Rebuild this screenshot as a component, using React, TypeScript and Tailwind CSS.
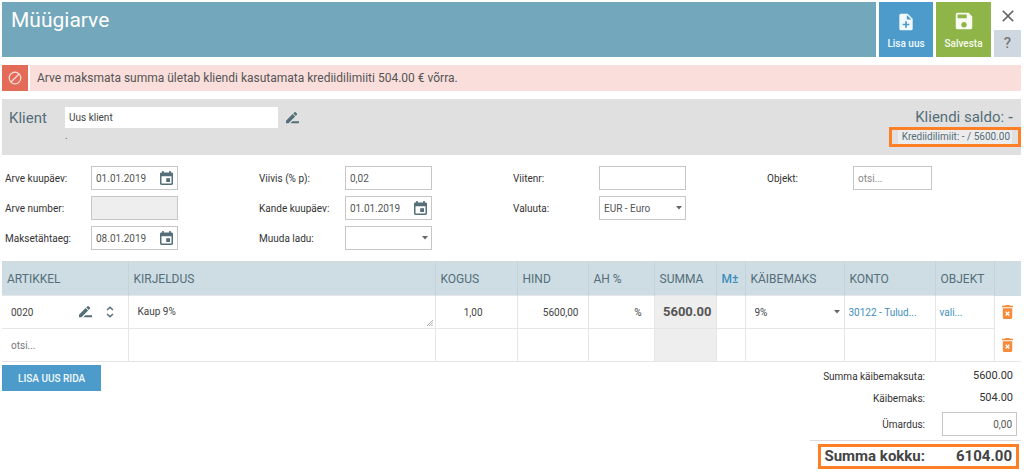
import type { ReactNode } from "react";
import { MdClose, MdNoteAdd, MdSave } from "react-icons/md";

interface iFieldProps {
	id: string;
	label: string;
	children: ReactNode;
}

interface iInputProps {
	id: string;
	value?: string;
	placeholder?: string;
	disabled?: boolean;
}

const inputClass =
	"block h-6 w-full border border-[#c6c6c6] bg-white px-1 text-[10px] text-[#555] placeholder:text-[#888] outline-none disabled:bg-[#eee]";

const Field = (props: iFieldProps) => (
	<div className="flex h-6 items-center">
		<label htmlFor={props.id} className="w-[86px] shrink-0 text-[10px] text-[#333]">
			{props.label}
		</label>
		{props.children}
	</div>
);

const TextInput = (props: iInputProps) => (
	<div className="w-[87px]">
		<input
			id={props.id}
			type="text"
			className={inputClass}
			defaultValue={props.value}
			placeholder={props.placeholder}
			disabled={props.disabled}
		/>
	</div>
);

const CalendarIcon = () => (
	<svg viewBox="0 0 13 14" className="h-3.5 w-[13px] fill-[#546e7a]">
		<path
			fillRule="evenodd"
			d="M2.2 0h1.6v1.4h5.4V0h1.6v1.4h.8A1.4 1.4 0 0 1 13 2.8v9.8a1.4 1.4 0 0 1-1.4 1.4H1.4A1.4 1.4 0 0 1 0 12.6V2.8a1.4 1.4 0 0 1 1.4-1.4h.8zM1.5 5.2v7.3h10V5.2z"
		/>
		<path d="M6.2 7.2h3.8v3.8H6.2z" />
	</svg>
);

const DateInput = (props: iInputProps) => (
	<div className="flex h-6 w-[87px] items-center border border-[#c6c6c6] bg-white pr-1 pl-1">
		<input
			id={props.id}
			type="text"
			className="min-w-0 flex-1 text-[10px] text-[#555] outline-none"
			defaultValue={props.value}
		/>
		<button type="button" aria-label="Kalender">
			<CalendarIcon />
		</button>
	</div>
);

const Caret = () => (
	<svg viewBox="0 0 6 4" className="pointer-events-none absolute right-1 h-1 w-1.5 fill-[#666]">
		<path d="M0 0h6L3 3.6z" />
	</svg>
);

const SelectInput = (props: iInputProps) => (
	<div className="relative flex h-6 w-[87px] items-center">
		<select id={props.id} className={inputClass + " appearance-none"}>
			<option>{props.value}</option>
		</select>
		<Caret />
	</div>
);

const PencilIcon = () => (
	<svg viewBox="0 0 13 12" className="h-3 w-[13px] fill-[#546e7a]">
		<path d="M0 11.2V8.7L6.6 2.1l2.5 2.5-6.6 6.6zM7.3 1.4L8.4.3a.9.9 0 0 1 1.2 0l1.3 1.3a.9.9 0 0 1 0 1.2L9.8 3.9zM6.4 9.2H13v2H4.4z" />
	</svg>
);

const UnfoldIcon = () => (
	<svg viewBox="0 0 8 12" className="h-3 w-2 stroke-[#546e7a]" fill="none" strokeWidth="1.5">
		<path d="M1 4L4 1.2 7 4M1 8l3 2.8L7 8" />
	</svg>
);

const BlockIcon = () => (
	<svg viewBox="0 0 14 14" className="h-3.5 w-3.5 stroke-[#fbdedb]" fill="none" strokeWidth="1.2">
		<circle cx="7" cy="7" r="5.8" />
		<path d="M3 11L11 3" />
	</svg>
);

const ResizeGrip = () => (
	<svg viewBox="0 0 6 6" className="pointer-events-none absolute right-0.5 bottom-0.5 h-1.5 w-1.5 stroke-[#999]" strokeWidth="0.8">
		<path d="M0 6L6 0M2.2 6L6 2.2M4.4 6L6 4.4" />
	</svg>
);

const DeleteButton = () => (
	<button type="button" aria-label="Kustuta rida" className="mx-auto block">
		<svg viewBox="0 0 11 14" className="h-3.5 w-[11px]">
			<path
				className="fill-[#f68b3c]"
				d="M3.6 0h3.8l.7.8H11v1.5H0V.8h2.9zM.8 3.2h9.4v9.2a1.5 1.5 0 0 1-1.5 1.5H2.3a1.5 1.5 0 0 1-1.5-1.5z"
			/>
			<path className="stroke-white" strokeWidth="1.4" d="M3.7 6.8l3.6 3.6M7.3 6.8l-3.6 3.6" />
		</svg>
	</button>
);

const th = "border-x border-[#c5d2d7] px-[5px] text-left text-xs font-normal text-[#546e7a]";
const td = "border border-[#e6e6e6] p-0 text-[10px] text-[#444]";
const cellInput = "block w-full bg-transparent px-[9px] text-[10px] outline-none placeholder:text-[#777]";

const InvoiceLines = () => (
	<table className="w-full table-fixed border-collapse">
		<colgroup>
			<col className="w-[126px]" />
			<col />
			<col className="w-[82px]" />
			<col className="w-[71px]" />
			<col className="w-[66px]" />
			<col className="w-[62px]" />
			<col className="w-[29px]" />
			<col className="w-[99px]" />
			<col className="w-[91px]" />
			<col className="w-[59px]" />
			<col className="w-[27px]" />
		</colgroup>
		<thead>
			<tr className="h-[34px] border-t border-[#d5d9da] bg-[#cddde3]">
				<th className={th + " border-l-0"}>ARTIKKEL</th>
				<th className={th}>KIRJELDUS</th>
				<th className={th}>KOGUS</th>
				<th className={th}>HIND</th>
				<th className={th}>AH %</th>
				<th className={th}>SUMMA</th>
				<th className={th}>
					<a href="#" className="font-medium text-[#3f8fbd]">M±</a>
				</th>
				<th className={th}>KÄIBEMAKS</th>
				<th className={th}>KONTO</th>
				<th className={th}>OBJEKT</th>
				<th className={th + " border-r-0"}></th>
			</tr>
		</thead>
		<tbody>
			<tr className="h-[33px]">
				<td className={td + " border-l-0"}>
					<div className="flex items-center pr-3.5">
						<input aria-label="Artikkel" className={cellInput + " min-w-0 flex-1"} defaultValue="0020" />
						<button type="button" aria-label="Muuda artiklit" className="mr-3.5">
							<PencilIcon />
						</button>
						<button type="button" aria-label="Ava loend">
							<UnfoldIcon />
						</button>
					</div>
				</td>
				<td className={td}>
					<div className="relative">
						<textarea
							aria-label="Kirjeldus"
							rows={1}
							className="block h-8 w-full resize-none px-[9px] py-2 text-[10px] leading-4 outline-none"
							defaultValue="Kaup 9%"
						/>
						<ResizeGrip />
					</div>
				</td>
				<td className={td}>
					<input aria-label="Kogus" className={cellInput + " pr-[34px] text-right"} defaultValue="1,00" />
				</td>
				<td className={td}>
					<input aria-label="Hind" className={cellInput + " text-right"} defaultValue="5600,00" />
				</td>
				<td className={td}>
					<div className="flex items-center pr-3">
						<input aria-label="Allahindlus" className={cellInput + " min-w-0 flex-1"} />
						<span>%</span>
					</div>
				</td>
				<td className={td + " bg-[#eee] pr-1 text-right text-[13px] font-bold text-[#555]"}>5600.00</td>
				<td className={td}></td>
				<td className={td}>
					<div className="relative flex items-center">
						<select aria-label="Käibemaks" className={cellInput + " appearance-none"}>
							<option>9%</option>
						</select>
						<Caret />
					</div>
				</td>
				<td className={td + " px-1"}>
					<a href="#" className="block truncate text-[#3f8fbd]">30122 - Tulud...</a>
				</td>
				<td className={td + " px-1"}>
					<a href="#" className="text-[#3f8fbd]">vali...</a>
				</td>
				<td className="p-0">
					<DeleteButton />
				</td>
			</tr>
			<tr className="h-[33px]">
				<td className={td + " border-l-0"}>
					<input aria-label="Otsi artiklit" className={cellInput} placeholder="otsi..." />
				</td>
				<td className={td}></td>
				<td className={td}></td>
				<td className={td}></td>
				<td className={td}></td>
				<td className={td + " bg-[#eee]"}></td>
				<td className={td}></td>
				<td className={td}></td>
				<td className={td}></td>
				<td className={td}></td>
				<td className="border-b border-[#e6e6e6] p-0">
					<DeleteButton />
				</td>
			</tr>
		</tbody>
	</table>
);

const Totals = () => (
	<div className="w-[211px] pt-[3px] text-[10px] text-[#333]">
		<div className="flex h-[22px] items-center pr-2 text-right">
			<span className="w-[115px]">Summa käibemaksuta:</span>
			<span className="flex-1 text-[11px]">5600.00</span>
		</div>
		<div className="flex h-[22px] items-center pr-2 text-right">
			<span className="w-[115px]">Käibemaks:</span>
			<span className="flex-1 text-[11px]">504.00</span>
		</div>
		<div className="flex items-center pt-[3px] pr-1 pb-1">
			<label htmlFor="umardus" className="w-[115px] text-right">Ümardus:</label>
			<div className="ml-auto w-[75px]">
				<input id="umardus" className={inputClass + " text-right"} defaultValue="0,00" />
			</div>
		</div>
		<div className="border-t border-[#ddd] pt-[3px] pr-0.5 pl-2">
			<div className="flex h-[25px] items-center border-[3px] border-[#ff7f27] pr-1 text-right text-[15px] font-bold text-[#444]">
				<span className="w-[104px] whitespace-nowrap">Summa kokku:</span>
				<span className="flex-1">6104.00</span>
			</div>
		</div>
	</div>
);

const App = () => {
	return (
		<div className="bg-white pt-0.5 pr-[3px] pl-0.5 font-[Roboto,sans-serif]">
			<header className="flex h-[55px] gap-[3px]">
				<h1 className="flex-1 bg-[#73a7bc] px-[9px] pt-[3px] text-[21px] text-white">Müügiarve</h1>
				<button
					type="button"
					className="flex w-[54px] flex-col items-center bg-[#4c9bcb] pt-2.5 text-[10px] font-medium text-[#f2f9fd]"
				>
					<MdNoteAdd size={20} />
					<span className="mt-1">Lisa uus</span>
				</button>
				<button
					type="button"
					className="flex w-[55px] flex-col items-center bg-[#8fb548] pt-2 text-[10px] font-medium text-[#f8fbf0]"
				>
					<MdSave size={22} />
					<span className="mt-1">Salvesta</span>
				</button>
				<div className="flex w-[27px] flex-col">
					<button type="button" aria-label="Sulge" className="flex h-7 items-center justify-center text-[#666]">
						<MdClose size={20} />
					</button>
					<button type="button" className="flex-1 bg-[#cfd8e0] text-[15px] font-medium text-[#777]">?</button>
				</div>
			</header>

			<div role="alert" className="mt-2 flex h-[26px] gap-0.5">
				<div className="flex w-[26px] items-center justify-center bg-[#e56b59]">
					<BlockIcon />
				</div>
				<p className="flex flex-1 items-center bg-[#f9dedb] px-[7px] text-xs text-[#555]">
					Arve maksmata summa ületab kliendi kasutamata krediidilimiiti 504.00 € võrra.
				</p>
			</div>

			<section className="mt-2 flex h-14 items-start justify-between bg-[#e0e0e0] text-[#546e7a]">
				<div className="flex pt-2 pl-[7px]">
					<label htmlFor="klient" className="w-14 text-[15px]">Klient</label>
					<div>
						<input
							id="klient"
							className="block h-[21px] w-[213px] bg-white px-1 text-[10px] text-[#444] outline-none"
							defaultValue="Uus klient"
						/>
						<p className="text-[10px]">.</p>
					</div>
					<button type="button" aria-label="Muuda klienti" className="ml-2 flex h-[22px] items-center">
						<PencilIcon />
					</button>
				</div>
				<div className="flex flex-col items-end pt-2">
					<p className="pr-2 text-[15px] leading-5">
						Kliendi saldo: <strong className="font-medium">-</strong>
					</p>
					<div className="h-5 border-[3px] border-[#ff7f27] px-1.5 text-[10px] leading-[14px]">
						<span className="block bg-[#ececec] pr-0.5 pl-1">Krediidilimiit: - / 5600.00</span>
					</div>
				</div>
			</section>

			<section className="grid grid-cols-4 pt-[11px] pb-[11px] pl-[3px]">
				<div className="flex flex-col gap-1.5">
					<Field id="arve-kuupaev" label="Arve kuupäev:">
						<DateInput id="arve-kuupaev" value="01.01.2019" />
					</Field>
					<Field id="arve-number" label="Arve number:">
						<TextInput id="arve-number" disabled />
					</Field>
					<Field id="maksetahtaeg" label="Maksetähtaeg:">
						<DateInput id="maksetahtaeg" value="08.01.2019" />
					</Field>
				</div>
				<div className="flex flex-col gap-1.5">
					<Field id="viivis" label="Viivis (% p):">
						<TextInput id="viivis" value="0,02" />
					</Field>
					<Field id="kande-kuupaev" label="Kande kuupäev:">
						<DateInput id="kande-kuupaev" value="01.01.2019" />
					</Field>
					<Field id="ladu" label="Muuda ladu:">
						<SelectInput id="ladu" />
					</Field>
				</div>
				<div className="flex flex-col gap-1.5">
					<Field id="viitenr" label="Viitenr:">
						<TextInput id="viitenr" />
					</Field>
					<Field id="valuuta" label="Valuuta:">
						<SelectInput id="valuuta" value="EUR - Euro" />
					</Field>
				</div>
				<div>
					<Field id="objekt" label="Objekt:">
						<div className="w-[79px]">
							<input id="objekt" className={inputClass} placeholder="otsi..." />
						</div>
					</Field>
				</div>
			</section>

			<InvoiceLines />

			<div className="flex items-start justify-between">
				<button type="button" className="mt-[3px] h-[26px] bg-[#4c9bcb] px-4 text-[10px] font-medium text-[#f2f9fd]">
					LISA UUS RIDA
				</button>
				<Totals />
			</div>
		</div>
	);
};

export default App;
